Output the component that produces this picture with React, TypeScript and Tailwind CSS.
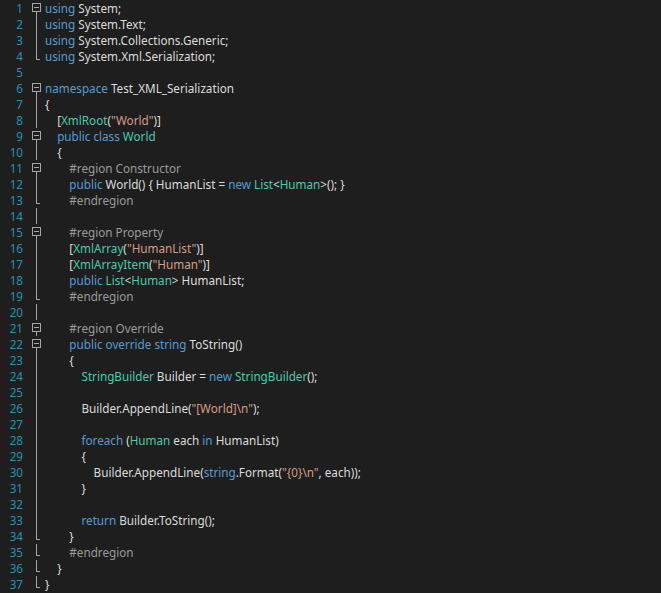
type Seg = [string, string];
const K = 'text-[#569cd6]', T = 'text-[#4ec9b0]', S = 'text-[#d69d85]', P = 'text-[#dcdcdc]', R = 'text-[#9b9b9b]';

const lines: { g: string; s: Seg[] }[] = [
  { g: 'box', s: [[K, 'using'], [P, ' System;']] },
  { g: 'line', s: [[K, 'using'], [P, ' System.Text;']] },
  { g: 'line', s: [[K, 'using'], [P, ' System.Collections.Generic;']] },
  { g: 'end', s: [[K, 'using'], [P, ' System.Xml.Serialization;']] },
  { g: '', s: [] },
  { g: 'box', s: [[K, 'namespace'], [P, ' Test_XML_Serialization']] },
  { g: 'line', s: [[P, '{']] },
  { g: 'line', s: [[P, '    ['], [T, 'XmlRoot'], [P, '('], [S, '"World"'], [P, ')]']] },
  { g: 'box', s: [[K, '    public class'], [P, ' '], [T, 'World']] },
  { g: 'line', s: [[P, '    {']] },
  { g: 'box', s: [[R, '        #region Constructor']] },
  { g: 'line', s: [[K, '        public'], [P, ' World() { HumanList = '], [K, 'new'], [P, ' '], [T, 'List'], [P, '<'], [T, 'Human'], [P, '>(); }']] },
  { g: 'end', s: [[R, '        #endregion']] },
  { g: 'line', s: [] },
  { g: 'box', s: [[R, '        #region Property']] },
  { g: 'line', s: [[P, '        ['], [T, 'XmlArray'], [P, '('], [S, '"HumanList"'], [P, ')]']] },
  { g: 'line', s: [[P, '        ['], [T, 'XmlArrayItem'], [P, '('], [S, '"Human"'], [P, ')]']] },
  { g: 'line', s: [[K, '        public'], [P, ' '], [T, 'List'], [P, '<'], [T, 'Human'], [P, '> HumanList;']] },
  { g: 'end', s: [[R, '        #endregion']] },
  { g: 'line', s: [] },
  { g: 'box', s: [[R, '        #region Override']] },
  { g: 'box', s: [[K, '        public override string'], [P, ' ToString()']] },
  { g: 'line', s: [[P, '        {']] },
  { g: 'line', s: [[P, '            '], [T, 'StringBuilder'], [P, ' Builder = '], [K, 'new'], [P, ' '], [T, 'StringBuilder'], [P, '();']] },
  { g: 'line', s: [] },
  { g: 'line', s: [[P, '            Builder.AppendLine('], [S, '"[World]\\n"'], [P, ');']] },
  { g: 'line', s: [] },
  { g: 'line', s: [[K, '            foreach'], [P, ' ('], [T, 'Human'], [P, ' each '], [K, 'in'], [P, ' HumanList)']] },
  { g: 'line', s: [[P, '            {']] },
  { g: 'line', s: [[P, '                Builder.AppendLine('], [K, 'string'], [P, '.Format('], [S, '"{0}\\n"'], [P, ', each));']] },
  { g: 'line', s: [[P, '            }']] },
  { g: 'line', s: [] },
  { g: 'line', s: [[K, '            return'], [P, ' Builder.ToString();']] },
  { g: 'end', s: [[P, '        }']] },
  { g: 'end', s: [[R, '        #endregion']] },
  { g: 'end', s: [[P, '    }']] },
  { g: 'end', s: [[P, '}']] },
];

// outlining margin: collapse box, vertical guide, or end tick
function Gutter({ g }: { g: string }) {
  return (
    <div className="w-[14px] h-4 shrink-0 ml-[8px] flex flex-col pl-[1px]">
      {g === 'box' && (
        <>
          <div className="mt-[3px] w-[9px] h-[9px] border border-[#a5a5a5] flex items-center justify-center">
            <div className="w-[5px] h-px bg-[#a5a5a5]" />
          </div>
          <div className="ml-[4px] w-px h-[4px] bg-[#a5a5a5]" />
        </>
      )}
      {g === 'line' && <div className="ml-[4px] w-px h-4 bg-[#a5a5a5]" />}
      {g === 'end' && (
        <>
          <div className="ml-[4px] w-px h-[11px] bg-[#a5a5a5]" />
          <div className="ml-[4px] w-[4px] h-px bg-[#a5a5a5]" />
        </>
      )}
    </div>
  );
}

export default function App() {
  return (
    <div className="w-[661px] h-[593px] bg-[#1e1e1e] overflow-hidden font-['Liberation_Mono'] text-[11.7px] leading-4">
      {lines.map((l, i) => (
        <div key={i} className="flex h-4 items-center">
          <div className="w-[23px] text-right text-[#2b91af] shrink-0">{i + 1}</div>
          <Gutter g={l.g} />
          <div className="whitespace-pre">
            {l.s.map(([c, t], j) => (
              <span key={j} className={c}>{t}</span>
            ))}
          </div>
        </div>
      ))}
    </div>
  );
}
